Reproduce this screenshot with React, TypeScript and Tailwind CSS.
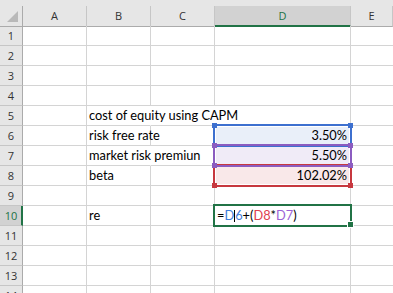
const cols = ['A', 'B', 'C', 'D', 'E']
const rows = [1, 2, 3, 4, 5, 6, 7, 8, 9, 10, 11, 12, 13, 14]

const cellFont = { fontFamily: 'Lato, "Liberation Sans", sans-serif' }
const headFont = { fontFamily: '"Open Sans", "Liberation Sans", sans-serif' }

// corner squares of a reference range, placed relative to the D cell
function Handles({ color, top = true, bottom = true, z }: { color: string; top?: boolean; bottom?: boolean; z: string }) {
  const sq = `absolute w-[5px] h-[5px] ${color} ${z}`
  return (
    <>
      {top && <div className={`${sq} -left-[3px] -top-[3px]`} />}
      {top && <div className={`${sq} left-[133px] -top-[3px]`} />}
      {bottom && <div className={`${sq} -left-[3px] top-[17px]`} />}
      {bottom && <div className={`${sq} left-[133px] top-[17px]`} />}
    </>
  )
}

function DCell({ row }: { row: number }) {
  const base = 'relative border-r border-b border-[#d4d4d4] h-[20px]'
  if (row === 6) {
    return (
      <div className={`${base} bg-[#e9eff9] shadow-[inset_0_0_0_1px_white]`}>
        <div className="absolute -left-[2px] -top-[2px] w-[139px] h-[23px] border-2 border-[#3d70cf] z-10" />
        <Handles color="bg-[#3d70cf]" bottom={false} z="z-10" />
        <div style={cellFont} className="text-[12.8px] leading-[19px] text-right pr-[3px] text-black">3.50%</div>
      </div>
    )
  }
  if (row === 7) {
    return (
      <div className={`${base} bg-[#f0ebf7] shadow-[inset_0_0_0_1px_white]`}>
        <div className="absolute -left-[2px] -top-[2px] w-[139px] h-[23px] border-2 border-[#8b5cc0] z-30" />
        <Handles color="bg-[#8b5cc0]" z="z-30" />
        <div style={cellFont} className="text-[12.8px] leading-[19px] text-right pr-[3px] text-black">5.50%</div>
      </div>
    )
  }
  if (row === 8) {
    return (
      <div className={`${base} bg-[#f9e8e9] shadow-[inset_0_0_0_1px_white]`}>
        <div className="absolute -left-[2px] -top-[2px] w-[139px] h-[23px] border-2 border-[#c7383f] z-20" />
        <Handles color="bg-[#c7383f]" top={false} z="z-20" />
        <div style={cellFont} className="text-[12.8px] leading-[19px] text-right pr-[3px] text-black">102.02%</div>
      </div>
    )
  }
  if (row === 10) {
    return (
      <div className={base}>
        <div className="absolute -left-[2px] -top-[2px] w-[139px] h-[23px] border-2 border-[#217346] z-10" />
        <div className="absolute left-[132px] top-[15px] w-[7px] h-[7px] bg-[#217346] border border-white z-20" />
        <div style={cellFont} className="relative text-[12.8px] leading-[19px] pl-[2px] whitespace-nowrap text-black">
          =<span className="text-[#3f7fdc]">D</span>
          <span className="inline-block w-px h-[12px] bg-black align-[-2px]" />
          <span className="text-[#3f7fdc]">6</span>+(<span className="text-[#e0404e]">D8</span>*<span className="text-[#9b5fd6]">D7</span>)
        </div>
      </div>
    )
  }
  return <div className={base} />
}

function BCell({ row }: { row: number }) {
  const text: Record<number, string> = { 5: 'cost of equity using CAPM', 6: 'risk free rate', 7: 'market risk premiun', 8: 'beta', 10: 're' }
  const t = text[row]
  // text spilling into C hides the grid line under it
  const spill = row === 5 || row === 7
  return (
    <div className={`relative z-[1] border-b border-[#d4d4d4] h-[20px] ${spill ? 'border-r border-r-transparent' : 'border-r'} border-[#d4d4d4]`}>
      {t && (
        <div
          style={cellFont}
          className={`text-[12.8px] leading-[19px] pl-[2px] whitespace-nowrap text-black ${row === 7 ? 'w-[126px] overflow-hidden' : ''}`}
        >
          {t}
        </div>
      )}
    </div>
  )
}

export default function App() {
  return (
    <div className="w-[393px] h-[293px] overflow-hidden bg-white">
      <div className="h-[6px] bg-[#e6e6e6]" />
      <div className="grid grid-cols-[23px_64px_64px_64px_136px_1fr] h-[20px] bg-[#e6e6e6]">
        <div className="relative border-r border-b border-[#ababab]">
          <svg width="22" height="19" className="absolute left-0 top-0">
            <polygon points="18,5 18,16 7,16" fill="#b9b9b9" />
          </svg>
        </div>
        {cols.map((c) => (
          <div
            key={c}
            style={headFont}
            className={`text-[11px] leading-[19px] text-center border-r border-[#c6c6c6] ${
              c === 'D' ? 'bg-[#d2d2d2] text-[#217346] border-b-2 border-b-[#217346] leading-[18px]' : 'text-[#333] border-b border-b-[#ababab]'
            }`}
          >
            {c}
          </div>
        ))}
      </div>
      {rows.map((r) => (
        <div key={r} className="grid grid-cols-[23px_64px_64px_64px_136px_1fr] h-[20px]">
          <div
            style={headFont}
            className={`text-[11px] leading-[19px] text-center border-b border-[#c6c6c6] ${
              r === 10 ? 'bg-[#d2d2d2] text-[#217346] border-r-2 border-r-[#217346] pl-[1px]' : 'bg-[#e6e6e6] text-[#333] border-r border-r-[#ababab]'
            }`}
          >
            {r}
          </div>
          <div className="border-r border-b border-[#d4d4d4] h-[20px]" />
          <BCell row={r} />
          <div className={`border-b border-[#d4d4d4] h-[20px] ${r === 5 || r === 7 ? 'border-r border-r-transparent' : 'border-r'} border-[#d4d4d4]`} />
          <DCell row={r} />
          <div className="border-b border-[#d4d4d4] h-[20px]" />
        </div>
      ))}
    </div>
  )
}
